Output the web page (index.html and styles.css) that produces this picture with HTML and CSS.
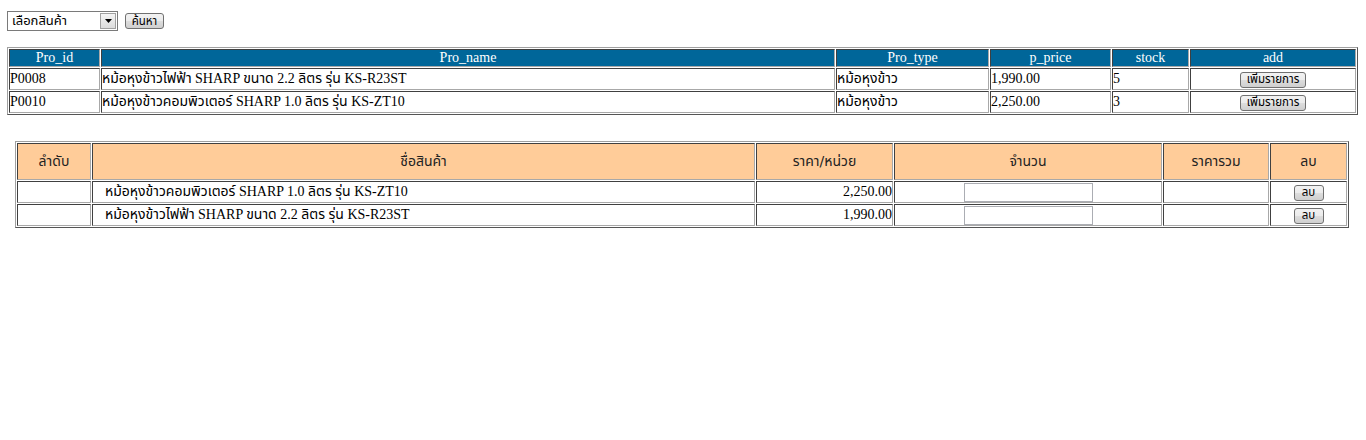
FILE: index.html
```html
<!DOCTYPE html>
<html>
<head>
<meta charset="utf-8">
<link rel="stylesheet" href="styles.css">
</head>
<body>
<form class="search">
  <div class="select">
    <span class="select-text">เลือกสินค้า</span>
    <span class="select-arrow"><svg width="7" height="4" viewBox="0 0 7 4"><path d="M0 0h7L3.5 4z" fill="#000"/></svg></span>
  </div>
  <button type="button" class="btn btn-search">ค้นหา</button>
</form>

<table class="grid products">
  <thead>
    <tr>
      <th class="c-id">Pro_id</th>
      <th class="c-name">Pro_name</th>
      <th class="c-type">Pro_type</th>
      <th class="c-price">p_price</th>
      <th class="c-stock">stock</th>
      <th class="c-add">add</th>
    </tr>
  </thead>
  <tbody>
    <tr>
      <td>P0008</td>
      <td>หม้อหุงข้าวไฟฟ้า SHARP ขนาด 2.2 ลิตร รุ่น KS-R23ST</td>
      <td>หม้อหุงข้าว</td>
      <td>1,990.00</td>
      <td>5</td>
      <td class="center"><button type="button" class="btn btn-add">เพิ่มรายการ</button></td>
    </tr>
    <tr>
      <td>P0010</td>
      <td>หม้อหุงข้าวคอมพิวเตอร์ SHARP 1.0 ลิตร รุ่น KS-ZT10</td>
      <td>หม้อหุงข้าว</td>
      <td>2,250.00</td>
      <td>3</td>
      <td class="center"><button type="button" class="btn btn-add">เพิ่มรายการ</button></td>
    </tr>
  </tbody>
</table>

<table class="grid cart">
  <thead>
    <tr>
      <th class="k-no">ลำดับ</th>
      <th class="k-name">ชื่อสินค้า</th>
      <th class="k-price">ราคา/หน่วย</th>
      <th class="k-qty">จำนวน</th>
      <th class="k-total">ราคารวม</th>
      <th class="k-del">ลบ</th>
    </tr>
  </thead>
  <tbody>
    <tr>
      <td></td>
      <td class="name">หม้อหุงข้าวคอมพิวเตอร์ SHARP 1.0 ลิตร รุ่น KS-ZT10</td>
      <td class="right">2,250.00</td>
      <td class="center"><input type="text" class="qty"></td>
      <td></td>
      <td class="center"><button type="button" class="btn btn-del">ลบ</button></td>
    </tr>
    <tr>
      <td></td>
      <td class="name">หม้อหุงข้าวไฟฟ้า SHARP ขนาด 2.2 ลิตร รุ่น KS-R23ST</td>
      <td class="right">1,990.00</td>
      <td class="center"><input type="text" class="qty"></td>
      <td></td>
      <td class="center"><button type="button" class="btn btn-del">ลบ</button></td>
    </tr>
  </tbody>
</table>
</body>
</html>
```

FILE: styles.css
```css
html, body {
  background: #fff;
}
body {
  margin: 11px 8px 0 7px;
  font-family: "Liberation Serif", "Noto Sans Thai", "Tahoma", serif;
  font-size: 14px;
  color: #000;
}

.search {
  display: flex;
  align-items: center;
  gap: 7px;
  margin: 0 0 16px 0;
  height: 20px;
}
.select {
  box-sizing: border-box;
  width: 111px;
  height: 20px;
  border: 1px solid #7a7a7a;
  background: #fff;
  display: flex;
  align-items: center;
  justify-content: space-between;
  padding: 0 1px 0 4px;
  font-family: "DejaVu Sans", "Noto Sans Thai", sans-serif;
  font-size: 13px;
}
.select-arrow {
  box-sizing: border-box;
  width: 16px;
  height: 16px;
  border: 1px solid #a0a0a0;
  background: linear-gradient(#f4f4f4, #dcdcdc);
  display: flex;
  align-items: center;
  justify-content: center;
}

.btn {
  box-sizing: border-box;
  font-family: "DejaVu Sans", "Noto Sans Thai", sans-serif;
  font-size: 11.5px;
  color: #000;
  border: 1px solid #707070;
  border-radius: 3px;
  background: linear-gradient(#f2f2f2 0%, #ebebeb 50%, #dddddd 51%, #cfcfcf 100%);
  padding: 0 2px;
  margin: 0;
  line-height: 13px;
  vertical-align: middle;
  white-space: nowrap;
}
.btn-search {
  width: 39px;
  height: 16px;
}
.btn-add {
  width: 66px;
  height: 16px;
}
.btn-del {
  width: 30px;
  height: 16px;
}

.grid {
  border-collapse: separate;
  border-spacing: 1px;
  border: 1px solid;
  border-color: #a0a0a0 #555 #555 #a0a0a0;
  table-layout: fixed;
}
.grid th,
.grid td {
  border: 1px solid;
  border-color: #404040 #a8a8a8 #a8a8a8 #404040;
  padding: 0;
  white-space: nowrap;
  overflow: hidden;
}

.products {
  width: 100%;
}
.products th {
  background: #006699;
  color: #fff;
  font-weight: normal;
  height: 16px;
  line-height: 16px;
}
.products td {
  height: 20px;
  line-height: 20px;
}
.c-id { width: 89px; }
.c-name { width: 732px; }
.c-type { width: 151px; }
.c-price { width: 119px; }
.c-stock { width: 75px; }

.cart {
  margin: 26px 9px 0 8px;
  width: calc(100% - 17px);
}
.cart th {
  background: #ffcc99;
  color: #222;
  font-weight: normal;
  height: 35px;
  font-family: "DejaVu Sans", "Noto Sans Thai", sans-serif;
  font-size: 14px;
}
.cart td {
  height: 20px;
  line-height: 20px;
}
.k-no { width: 72px; }
.k-name { width: 661px; }
.k-price { width: 135px; }
.k-qty { width: 266px; }
.k-total { width: 104px; }

.center { text-align: center; }
.right { text-align: right; }
.cart td.name { padding-left: 12px; }

.qty {
  box-sizing: border-box;
  width: 129px;
  height: 19px;
  border: 1px solid #abadb3;
  margin: 0;
  padding: 0;
  vertical-align: top;
  margin-top: 1px;
}
```
